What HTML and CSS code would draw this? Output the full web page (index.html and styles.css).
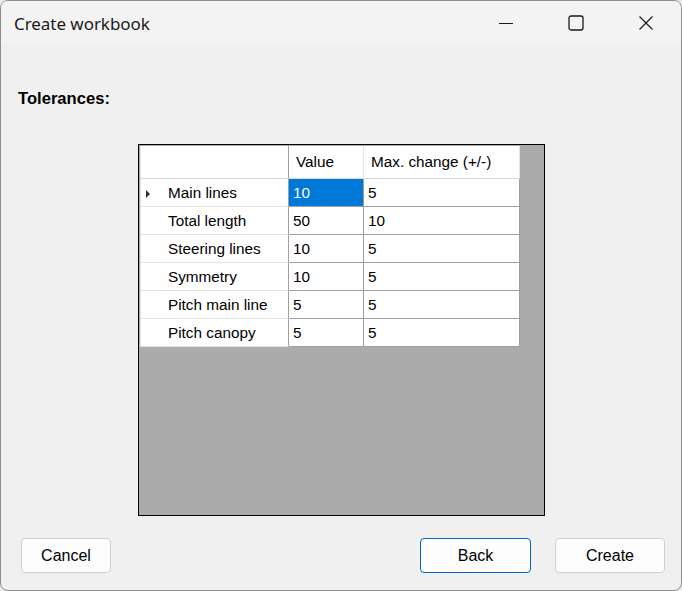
FILE: index.html
```html
<!DOCTYPE html>
<html>
<head>
<meta charset="utf-8">
<link rel="stylesheet" href="styles.css">
</head>
<body>
<div class="window">
  <div class="titlebar">
    <div class="title">Create workbook</div>
    <div class="controls">
      <div class="ctl"><svg width="16" height="16" viewBox="0 0 16 16"><line x1="1" y1="8.5" x2="15" y2="8.5" stroke="#1a1a1a" stroke-width="1"/></svg></div>
      <div class="ctl"><svg width="16" height="16" viewBox="0 0 16 16"><rect x="1" y="1" width="14" height="14" rx="2" fill="none" stroke="#1a1a1a" stroke-width="1.3"/></svg></div>
      <div class="ctl"><svg width="16" height="16" viewBox="0 0 16 16"><path d="M1.5 1.5 L14.5 14.5 M14.5 1.5 L1.5 14.5" stroke="#1a1a1a" stroke-width="1.2" fill="none"/></svg></div>
    </div>
  </div>
  <div class="content">
    <div class="label">Tolerances:</div>
    <div class="gridbox">
      <div class="grid">
        <div class="cell hcorner"></div>
        <div class="cell hcol hval">Value</div>
        <div class="cell hcol hmax">Max. change (+/-)</div>

        <div class="cell rowhead"><span class="arrow"></span>Main lines</div>
        <div class="cell data sel">10</div>
        <div class="cell data">5</div>

        <div class="cell rowhead">Total length</div>
        <div class="cell data">50</div>
        <div class="cell data">10</div>

        <div class="cell rowhead">Steering lines</div>
        <div class="cell data">10</div>
        <div class="cell data">5</div>

        <div class="cell rowhead">Symmetry</div>
        <div class="cell data">10</div>
        <div class="cell data">5</div>

        <div class="cell rowhead">Pitch main line</div>
        <div class="cell data">5</div>
        <div class="cell data">5</div>

        <div class="cell rowhead">Pitch canopy</div>
        <div class="cell data">5</div>
        <div class="cell data">5</div>
      </div>
    </div>
    <div class="buttons">
      <button class="btn cancel">Cancel</button>
      <div class="spacer"></div>
      <button class="btn back default">Back</button>
      <button class="btn create">Create</button>
    </div>
  </div>
</div>
</body>
</html>
```

FILE: styles.css
```css
html, body {
  margin: 0;
  padding: 0;
  background: #e9e9e9;
}
.window {
  width: 682px;
  height: 591px;
  box-sizing: border-box;
  border: 1px solid #8e8e8e;
  border-radius: 8px;
  overflow: hidden;
  display: flex;
  flex-direction: column;
  background: #f0f0f0;
}
.titlebar {
  height: 44px;
  flex: none;
  background: #f3f3f3;
  display: flex;
  align-items: center;
}
.title {
  margin-left: 13px;
  font-family: "Noto Sans", "Open Sans", sans-serif;
  font-size: 17px;
  color: #1a1a1a;
  letter-spacing: -0.05px;
}
.controls {
  margin-left: auto;
  display: flex;
  height: 44px;
}
.ctl {
  width: 70px;
  height: 44px;
  display: flex;
  align-items: center;
  justify-content: center;
}
.content {
  flex: 1;
  display: flex;
  flex-direction: column;
  font-family: "Liberation Sans", Arial, sans-serif;
}
.label {
  margin: 45px 0 0 17px;
  font-size: 16.6px;
  font-weight: bold;
  line-height: 18px;
  color: #000;
}
.gridbox {
  margin: 36px 0 0 137px;
  width: 407px;
  height: 372px;
  box-sizing: border-box;
  border: 1px solid #000;
  background: #ababab;
  padding: 1px 0 0 1px;
}
.grid {
  display: grid;
  grid-template-columns: 149px 75px 156px;
  grid-template-rows: 33px repeat(6, 28px);
  width: 380px;
  background: #fff;
}
.cell {
  box-sizing: border-box;
  font-size: 15.3px;
  color: #000;
  display: flex;
  align-items: center;
  white-space: nowrap;
  position: relative;
}
.hcorner {
  border-right: 1px solid #a0a0a0;
  border-bottom: 1px solid #d8d8d8;
  border-left: 1px solid #e3e3e3;
}
.hcol {
  border-right: 1px solid #e3e3e3;
  border-bottom: 1px solid #d8d8d8;
}
.hval { padding-left: 7px; }
.hmax { padding-left: 7px; }
.rowhead {
  border-left: 1px solid #e3e3e3;
  border-right: 1px solid #a0a0a0;
  border-bottom: 1px solid #e3e3e3;
  padding-left: 27px;
}
.data {
  border-right: 1px solid #a0a0a0;
  border-bottom: 1px solid #a0a0a0;
  padding-left: 4px;
}
.sel {
  background: #0078d7;
  color: #fff;
}
.arrow {
  position: absolute;
  left: 5px;
  top: 11px;
  width: 0;
  height: 0;
  border-top: 4px solid transparent;
  border-bottom: 4px solid transparent;
  border-left: 4px solid #333;
}
.buttons {
  display: flex;
  margin: 22px 16px 0 20px;
  height: 35px;
}
.spacer { flex: 1; }
.btn {
  box-sizing: border-box;
  height: 35px;
  background: #fdfdfd;
  border: 1px solid #d0d0d0;
  border-radius: 4px;
  font-family: "Liberation Sans", Arial, sans-serif;
  font-size: 16px;
  color: #000;
  padding: 0;
}
.cancel { width: 90px; }
.back { width: 111px; margin-right: 24px; }
.create { width: 110px; }
.default { border-color: #0067c0; }
```
